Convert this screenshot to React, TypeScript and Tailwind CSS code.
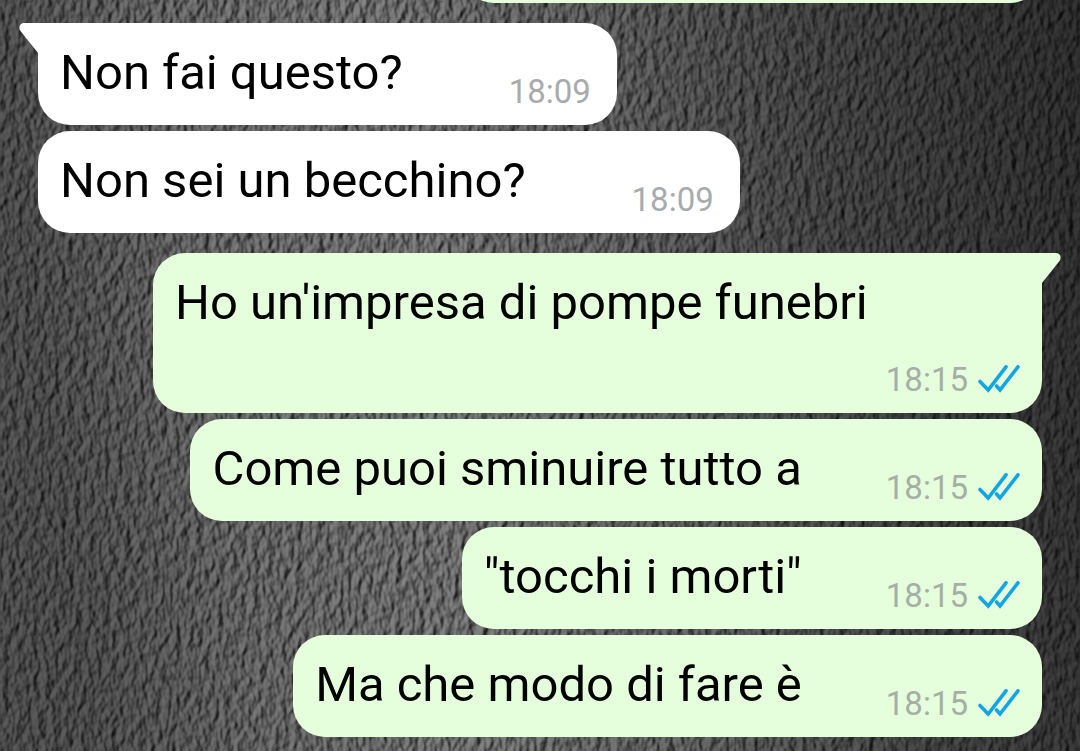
import clsx from "clsx";

type Message = {
  text: string;
  time: string;
  mine: boolean;
  first?: boolean;
};

const messages: Message[] = [
  { text: "Non fai questo?", time: "18:09", mine: false, first: true },
  { text: "Non sei un becchino?", time: "18:09", mine: false },
  { text: "Ho un'impresa di pompe funebri", time: "18:15", mine: true, first: true },
  { text: "Come puoi sminuire tutto a", time: "18:15", mine: true },
  { text: '"tocchi i morti"', time: "18:15", mine: true },
  { text: "Ma che modo di fare è", time: "18:15", mine: true },
];

function Wallpaper() {
  return (
    <svg className="absolute inset-0 -z-10 h-full w-full" aria-hidden="true">
      <defs>
        <linearGradient id="shade" x1="0" y1="0.1" x2="1" y2="0">
          <stop offset="0" stopColor="#5c5c5c" />
          <stop offset="0.15" stopColor="#787878" />
          <stop offset="0.35" stopColor="#868686" />
          <stop offset="0.55" stopColor="#707070" />
          <stop offset="0.75" stopColor="#505050" />
          <stop offset="1" stopColor="#353535" />
        </linearGradient>
        <filter id="leather" x="0" y="0" width="100%" height="100%" colorInterpolationFilters="sRGB">
          <feTurbulence type="fractalNoise" baseFrequency="0.14 0.09" numOctaves="2" seed="7" />
          <feDiffuseLighting surfaceScale="2.800" diffuseConstant="1" lightingColor="#ffffff">
            <feDistantLight azimuth="200" elevation="52" />
          </feDiffuseLighting>
          <feGaussianBlur stdDeviation="0.700" />
        </filter>
      </defs>
      <rect width="100%" height="100%" fill="url(#shade)" />
      <rect width="100%" height="100%" filter="url(#leather)" className="mix-blend-multiply" />
    </svg>
  );
}

function Tail({ mine }: { mine: boolean }) {
  return (
    <svg
      viewBox="0 0 20 31"
      className={clsx(
        "absolute top-0 h-[31px] w-5",
        mine ? "left-full -ml-px -scale-x-100 text-[#e5ffdc]" : "right-full -mr-px text-white"
      )}
      aria-hidden="true"
    >
      <path d="M20 0H5C1 0 -1 4.500 1.500 8L19 30H20Z" fill="currentColor" />
    </svg>
  );
}

function Ticks() {
  return (
    <svg
      viewBox="0 0 42 30"
      className="h-[30px] w-[42px]"
      fill="none"
      stroke="#12a5e4"
      strokeWidth="3.600"
      strokeLinecap="round"
      role="img"
      aria-label="Letto"
    >
      <path d="M2 16.500L10.200 25L28 1.800" />
      <path d="M18.500 21L22 25L40 1.800" />
    </svg>
  );
}

function Bubble({ text, time, mine, first }: Message) {
  return (
    <li
      className={clsx(
        "relative flex max-w-[889px] flex-wrap items-end gap-y-[18px] rounded-[32px] pt-[21px] pb-[13px] pl-[22px]",
        mine ? "gap-x-[84px] self-end bg-[#e5ffdc] pr-[22px]" : "gap-x-[106px] self-start bg-white pr-[26px]",
        first && (mine ? "rounded-tr-none" : "rounded-tl-none"),
        first && mine && "mt-[14px]"
      )}
    >
      {first && <Tail mine={mine} />}
      <p className="mb-[10px] text-[49px] leading-[58px] text-black">{text}</p>
      <div className="ml-auto flex items-center gap-[10px]">
        <time className={clsx("text-[33px] leading-10", mine ? "text-[#a6afa6]" : "text-[#a8abae]")}>{time}</time>
        {mine && <Ticks />}
      </div>
    </li>
  );
}

export default function App() {
  return (
    <main className="relative isolate min-h-screen overflow-hidden bg-[#444444] font-['Roboto',sans-serif]">
      <Wallpaper />
      {/* end of the previous message, scrolled out of view */}
      <div className="mr-[38px] -mt-[99px] ml-auto h-[102px] w-[580px] rounded-[32px] bg-[#e5ffdc]" />
      <ul className="mt-5 flex flex-col gap-[6px] px-[38px] pb-[14px]">
        {messages.map((message) => (
          <Bubble key={message.text} {...message} />
        ))}
      </ul>
    </main>
  );
}
